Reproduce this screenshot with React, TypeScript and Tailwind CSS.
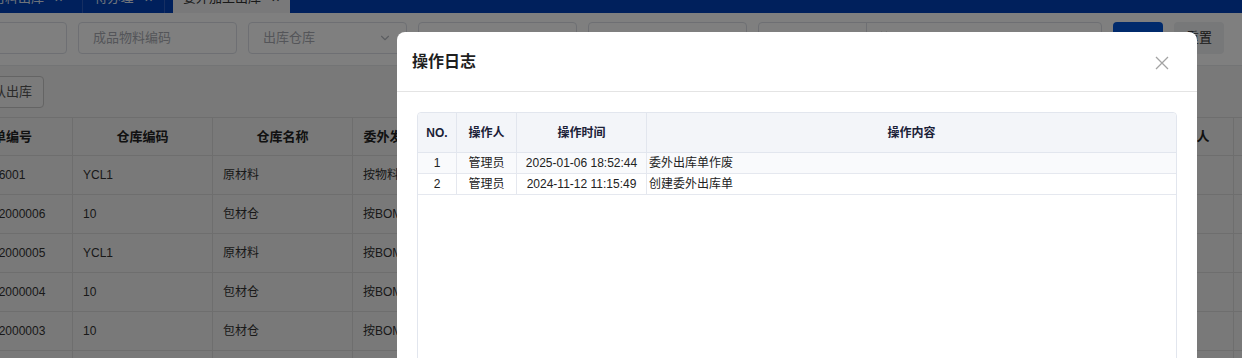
import { ChevronDown, Calendar } from "lucide-react";

const font = { fontFamily: '"Liberation Sans", "Noto Sans CJK SC", sans-serif' };

const tabs = [
    { label: "原材料出库", active: false, w: "w-[123px]", ml: "ml-[-40px]" },
    { label: "待办理", active: false, w: "w-[82px]", ml: "" },
    { label: "委外加工出库", active: true, w: "w-[117px]", ml: "ml-[8px]" },
];

const cols = [
    { title: "出库单编号", w: "w-[146px]" },
    { title: "仓库编码", w: "w-[140px]" },
    { title: "仓库名称", w: "w-[140px]" },
    { title: "委外发料方式", w: "w-[100px]" },
    { title: "物料编码", w: "w-[160px]" },
    { title: "物料名称", w: "w-[160px]" },
    { title: "规格型号", w: "w-[160px]" },
    { title: "数量", w: "w-[114px]" },
    { title: "状态", w: "w-[100px]" },
    { title: "创建人", w: "w-[87px]" },
    { title: "创建时间", w: "w-[160px]" },
];

const rows = [
    ["WWCK016001", "YCL1", "原材料", "按物料"],
    ["WWCK242000006", "10", "包材仓", "按BOM"],
    ["WWCK242000005", "YCL1", "原材料", "按BOM"],
    ["WWCK242000004", "10", "包材仓", "按BOM"],
    ["WWCK242000003", "10", "包材仓", "按BOM"],
    ["WWCK242000002", "10", "包材仓", "按BOM"],
];

const logs = [
    { no: 1, user: "管理员", time: "2025-01-06 18:52:44", content: "委外出库单作废" },
    { no: 2, user: "管理员", time: "2024-11-12 11:15:49", content: "创建委外出库单" },
];

function Field({ text, w, select }: { text?: string; w: string; select?: boolean }) {
    return (
        <div className={`${w} h-[32px] shrink-0 border border-[#dcdfe6] rounded-[4px] bg-white flex items-center px-[14px] text-[13px] text-[#a8abb2]`}>
            <span className="flex-1 truncate">{text}</span>
            {select && <ChevronDown className="w-[14px] h-[14px] text-[#b8bbc2]" />}
        </div>
    );
}

function Page() {
    return (
        <div className="flex flex-col">
            {/* tab strip, mostly scrolled off the top */}
            <div className="h-[13px] bg-[#0040b8] flex overflow-hidden">
                {tabs.map((t) => (
                    <div
                        key={t.label}
                        className={`${t.w} ${t.ml} shrink-0 h-[30px] -mt-[17px] flex items-center justify-center gap-[10px] text-[13px] ${t.active ? "bg-[#f2f3f5] text-[#333]" : "text-[#dfe6f5] border-r border-[#2d5fc4]"}`}
                    >
                        <span>{t.label}</span>
                        <span className="text-[11px]">✕</span>
                    </div>
                ))}
            </div>

            {/* filters */}
            <div className="bg-white pt-[9px] pb-[11px] border-b border-[#e6e8eb]">
                <div className="flex gap-[11px] ml-[-92px]">
                    <Field text="委外单号" w="w-[159px]" />
                    <Field text="成品物料编码" w="w-[159px]" />
                    <Field text="出库仓库" w="w-[159px]" select />
                    <Field w="w-[159px]" />
                    <Field w="w-[159px]" />
                    <div className="w-[344px] h-[32px] shrink-0 border border-[#dcdfe6] rounded-[4px] bg-white flex text-[13px] text-[#a8abb2]">
                        <div className="w-[108px] border-r border-[#dcdfe6]" />
                        <div className="flex-1 flex items-center px-[10px]">
                            <Calendar className="w-[14px] h-[14px]" />
                        </div>
                    </div>
                    <div className="w-[50px] h-[32px] shrink-0 rounded-[4px] bg-[#0054d8]" />
                    <div className="w-[50px] h-[32px] shrink-0 rounded-[4px] bg-[#eef0f3] text-[#333] text-[13px] flex items-center justify-center">重置</div>
                </div>
            </div>

            {/* actions + table */}
            <div className="bg-[#f2f2f2] pt-[10px]">
                <div className="flex ml-[-32px]">
                    <div className="w-[76px] h-[32px] border border-[#c8c8c8] rounded-[4px] bg-[#f7f7f7] text-[13px] text-[#555] flex items-center justify-center">确认出库</div>
                </div>
                <div className="mt-[9px] ml-[-73px] flex">
                    {cols.map((c, ci) => (
                        <div key={c.title} className={`${c.w} shrink-0 flex flex-col`}>
                            <div className="h-[39px] border-t border-r border-b border-[#dcdcdc] flex items-center justify-center text-[13px] font-bold text-[#222]">
                                {c.title}
                            </div>
                            {rows.map((r, ri) => (
                                <div key={ri} className="h-[39px] border-r border-b border-[#dcdcdc] flex items-center px-[10px] text-[12px] text-[#333] whitespace-nowrap overflow-hidden">
                                    {ci === 0 ? <span className="pl-[9px]">{r[0]}</span> : r[ci] ?? ""}
                                </div>
                            ))}
                        </div>
                    ))}
                </div>
            </div>
        </div>
    );
}

function LogModal() {
    return (
        <div className="absolute left-[397px] top-[32px] w-[800px] h-[400px] bg-white rounded-[8px] flex flex-col">
            <div className="h-[60px] border-b border-[#e4e4e4] flex items-center justify-between pl-[15px] pr-[28px]">
                <h2 className="text-[16px] font-semibold text-[#1f1f1f]">操作日志</h2>
                <svg width="14" height="14" viewBox="0 0 14 14" className="mt-[2px]">
                    <path d="M1 1L13 13M13 1L1 13" stroke="#a3a3a3" strokeWidth="1.3" fill="none" />
                </svg>
            </div>
            <div className="px-[20px] pt-[20px]">
                <div className="border border-[#e2e6ee] rounded-t-[4px] h-[300px] text-[12px]">
                    <div className="grid grid-cols-[39px_60px_130px_1fr] h-[40px] bg-[#f3f5f9] border-b border-[#e2e6ee] font-bold text-[#1b2137] rounded-t-[4px]">
                        <div className="flex items-center justify-center border-r border-[#e2e6ee]">NO.</div>
                        <div className="flex items-center justify-center border-r border-[#e2e6ee]">操作人</div>
                        <div className="flex items-center justify-center border-r border-[#e2e6ee]">操作时间</div>
                        <div className="flex items-center justify-center">操作内容</div>
                    </div>
                    {logs.map((l, i) => (
                        <div
                            key={l.no}
                            className={`grid grid-cols-[39px_60px_130px_1fr] h-[21px] border-b border-[#e5e8ef] text-[#222] ${i === 0 ? "bg-[#f9fafc]" : "bg-white"}`}
                        >
                            <div className="flex items-center justify-center border-r border-[#e5e8ef]">{l.no}</div>
                            <div className="flex items-center justify-center border-r border-[#e5e8ef]">{l.user}</div>
                            <div className="flex items-center justify-center border-r border-[#e5e8ef]">{l.time}</div>
                            <div className="flex items-center pl-[2px]">{l.content}</div>
                        </div>
                    ))}
                </div>
            </div>
        </div>
    );
}

export default function App() {
    return (
        <div className="relative w-[1242px] h-[358px] overflow-hidden bg-white" style={font}>
            <Page />
            <div className="absolute inset-0 bg-black/50" />
            <LogModal />
        </div>
    );
}
